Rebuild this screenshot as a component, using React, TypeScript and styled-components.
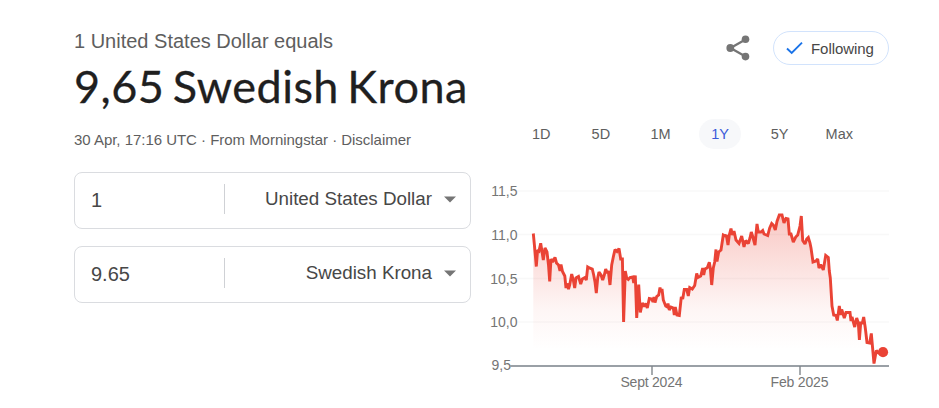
import React from "react";
import styled, { createGlobalStyle } from "styled-components";

const Global = createGlobalStyle`
  * { box-sizing: border-box; }
  body {
    margin: 0;
    background: #fff;
    font-family: "Liberation Sans", Arial, sans-serif;
    overflow: hidden;
  }
`;

const Page = styled.main`
  display: flex;
  width: 939px;
  height: 408px;
  padding: 30px 50px 0 74px;
  gap: 15px;
`;

const Converter = styled.section`
  width: 397px;
  flex: none;
`;

const Source = styled.div`
  font-size: 20px;
  line-height: 22px;
  color: #5e5e5e;
  white-space: nowrap;
`;

const Result = styled.h1`
  margin: 8px 0 0;
  font-family: Lato, sans-serif;
  font-weight: 400;
  font-size: 45px;
  line-height: 52px;
  letter-spacing: 0.45px;
  word-spacing: -3.6px;
  -webkit-text-stroke: 0.3px #1f1f1f;
  color: #1f1f1f;
  white-space: nowrap;
`;

const Meta = styled.div`
  margin-top: 19px;
  font-size: 15px;
  line-height: 18px;
  letter-spacing: -0.03px;
  color: #5e5e5e;
  white-space: nowrap;
`;

const Fields = styled.div`
  display: flex;
  flex-direction: column;
  gap: 17px;
  margin-top: 23px;
`;

const Field = styled.div`
  display: flex;
  align-items: center;
  height: 57px;
  padding: 0 14px 0 16px;
  border: 1px solid #dadce0;
  border-radius: 8px;
`;

const Amount = styled.span`
  flex: none;
  width: 133px;
  margin-bottom: 2px;
  font-size: 20px;
  line-height: 24px;
  color: #474747;
`;

const Divider = styled.span`
  flex: none;
  width: 1px;
  height: 30px;
  margin-bottom: 3px;
  background: #cfd1d5;
`;

const Currency = styled.span`
  flex: 1;
  margin: 0 12px 3px 0;
  font-size: 18.8px;
  line-height: 24px;
  text-align: right;
  color: #474747;
`;

const Caret = styled.svg`
  display: block;
  flex: none;
  margin-bottom: 2px;
`;

const Trend = styled.section`
  width: 403px;
  flex: none;
`;

const Actions = styled.div`
  display: flex;
  justify-content: flex-end;
  align-items: center;
  gap: 22px;
  height: 36px;
`;

const Follow = styled.button`
  display: flex;
  align-items: center;
  gap: 8px;
  width: 116px;
  height: 34px;
  padding: 0 0 0 12px;
  border: 1px solid #d2e3fc;
  border-radius: 17px;
  background: #fff;
  font: 15px "Liberation Sans", Arial, sans-serif;
  letter-spacing: -0.05px;
  color: #474747;
`;

const Ranges = styled.nav`
  display: flex;
  margin: 53px 0 0 34.5px;
  gap: 18px;
`;

const Range = styled.button<{ $active?: boolean }>`
  width: 41.6px;
  height: 30px;
  padding: 0;
  border: 0;
  border-radius: 15px;
  background: ${(p) => (p.$active ? "#f7f8fa" : "transparent")};
  color: ${(p) => (p.$active ? "#3b5bd9" : "#5e5e5e")};
  font: 14.5px "Liberation Sans", Arial, sans-serif;
`;

const Chart = styled.svg`
  display: block;
  margin-top: 26px;
  font: 14px "Liberation Sans", Arial, sans-serif;
`;

const fields = [
  { amount: "1", currency: "United States Dollar" },
  { amount: "9.65", currency: "Swedish Krona" },
];

const ranges = ["1D", "5D", "1M", "1Y", "5Y", "Max"];

const levels = [
  { label: "11,5", y: 191 },
  { label: "11,0", y: 234.5 },
  { label: "10,5", y: 278.5 },
  { label: "10,0", y: 322 },
];

const months = [
  { label: "Sept 2024", x: 652 },
  { label: "Feb 2025", x: 800 },
];

const rate =
  "533.3,233.5 534.5,246 536.3,266.5 537.6,250 539,251 540.7,243.3 543.3,260 545,248 547,252 548.5,265 549.7,281.5 551,259 552.5,262 555,257.5 556.5,263 558.5,265 560,271 561,264.5 562.5,271.5 564.8,276 566,288 567,283.5 568.5,289 569.7,285 571.7,274 573.3,280 574.7,288 576,278 578.5,276.5 580.7,284 582.3,279 585,277.5 586.3,280 587.7,267 589.3,268 592.3,269 593.7,275 595,282 596.3,293 597.7,278 599,272 601,275 602.7,280 604.3,275 605.7,269 607.3,273 608.3,271 610,285 611.7,265 613.3,257 615,249.5 617,251.5 619,248.5 620.7,259 622.4,259 623.6,322 625.3,271 626.7,278 628.3,279.5 630,277.5 632.7,277 633.7,283 635.3,275.5 636.7,318 638.7,284.5 640.3,312.5 642.3,303 644.3,306.5 646,303.5 647.3,308 649.3,298.5 651.7,299 653,302 654,297 655,302.5 656.7,296.5 658.7,295 660,287.5 661,292 662,289 663.3,300 665.7,306 667.3,307 668,303.5 669.3,310 671,307 673.3,308 674.3,315 675.3,307 677,315 679.3,315.5 681.3,297 682.7,299 684.3,289.5 686.7,289.5 688.3,296 689.7,287.5 692.3,289 694.7,285.5 696.7,273.5 698,277.5 700.7,276 702.7,268 703.7,275 705,269 707.3,267.7 709.3,262.3 710.3,268 711.7,285 713.3,268 714.7,262 716,249.5 717,261.5 718.7,252 721,250 723.3,235 725.3,236 726.3,235 728,245 729.3,235 731,228.5 732.3,235 734,231 736,240 739,243.5 741.7,236 744,247 745.7,240.5 748.3,243.5 750,238 751.3,232 752.7,236.5 755,245 757,224 758.3,232 761,232 762.7,230.5 764,234 767.7,235.5 769.7,228 771.7,223.5 773.3,225 775.3,230 777,221.5 779.3,215 782,215 784,223 786,218.5 788,219 789.3,234 791,234 793.3,242 795.7,237 797.7,235 800,226 801.3,216 802.7,240.5 805,244 806.7,239 808.3,237.5 810,243 811,248 813,262 816,261 817.7,259 819,268 820.7,264.5 823.3,270 825.7,255.5 828.3,257.5 829.3,271 830.3,278 832,306 833.7,315 836,315.5 837.3,320.5 839.3,306 840.7,315 841.7,309.5 844.3,318 846,312.5 850,312.5 851,321 852,317 854.7,327 856.7,318 858.3,323 859.4,340 860.7,323 862.3,323 863.7,317 865.3,328 867,342.5 869.7,343 871.3,333.5 874,363.5 876.3,350.5 878.5,353 882.5,352";

function ShareIcon() {
  return (
    <svg width="26" height="28" viewBox="0 0 26 28" fill="#757575">
      <path d="M20.5 5.5 5.5 14l15 8.5" fill="none" stroke="#757575" strokeWidth="2.3" />
      <circle cx="20.5" cy="5.3" r="3.8" />
      <circle cx="5.3" cy="14" r="3.9" />
      <circle cx="20.5" cy="22.6" r="3.8" />
    </svg>
  );
}

function CheckIcon() {
  return (
    <svg width="17" height="14" viewBox="0 0 17 14">
      <path d="M1 7.5 5.7 12 16 1.7" fill="none" stroke="#1a73e8" strokeWidth="1.9" />
    </svg>
  );
}

function RateChart() {
  return (
    <Chart width="403" height="220" viewBox="486 175 403 220">
      <defs>
        <linearGradient id="fade" x1="0" y1="215" x2="0" y2="350" gradientUnits="userSpaceOnUse">
          <stop offset="0" stopColor="#ea4335" stopOpacity="0.29" />
          <stop offset="0.7" stopColor="#ea4335" stopOpacity="0.05" />
          <stop offset="1" stopColor="#ea4335" stopOpacity="0" />
        </linearGradient>
      </defs>
      {levels.map((l) => (
        <g key={l.label}>
          <path d={`M517 ${l.y}H889`} stroke="#f8f8f8" strokeWidth="1.5" />
          <text x="517.5" y={l.y + 5} textAnchor="end" fill="#757575">{l.label}</text>
        </g>
      ))}
      <text x="511" y="370" textAnchor="end" fill="#757575">9,5</text>
      <polygon points={`533.3,366 ${rate} 882.5,366`} fill="url(#fade)" />
      <path d="M510 366H889" stroke="#9aa0a6" strokeWidth="2" />
      {months.map((m) => (
        <g key={m.label}>
          <path d={`M${m.x} 366v9`} stroke="#80868b" strokeWidth="1.4" />
          <text x={m.x - 0.5} y="387" textAnchor="middle" fill="#757575" textLength={m.x < 700 ? 62 : 58}>
            {m.label}
          </text>
        </g>
      ))}
      <polyline points={rate} fill="none" stroke="#ea4335" strokeWidth="2.9" strokeLinejoin="miter" strokeMiterlimit="2" />
      <circle cx="883" cy="352.2" r="5.1" fill="#ea4335" />
    </Chart>
  );
}

export default function App() {
  return (
    <>
      <Global />
      <Page>
        <Converter>
          <Source>1 United States Dollar equals</Source>
          <Result>9,65 Swedish Krona</Result>
          <Meta>30 Apr, 17:16 UTC · From Morningstar · Disclaimer</Meta>
          <Fields>
            {fields.map((f) => (
              <Field key={f.currency}>
                <Amount>{f.amount}</Amount>
                <Divider />
                <Currency>{f.currency}</Currency>
                <Caret width="12" height="7" viewBox="0 0 12 7">
                  <path d="M0 .5h12L6 6.5z" fill="#757575" />
                </Caret>
              </Field>
            ))}
          </Fields>
        </Converter>
        <Trend>
          <Actions>
            <ShareIcon />
            <Follow>
              <CheckIcon />
              Following
            </Follow>
          </Actions>
          <Ranges>
            {ranges.map((r) => (
              <Range key={r} $active={r === "1Y"}>{r}</Range>
            ))}
          </Ranges>
          <RateChart />
        </Trend>
      </Page>
    </>
  );
}
